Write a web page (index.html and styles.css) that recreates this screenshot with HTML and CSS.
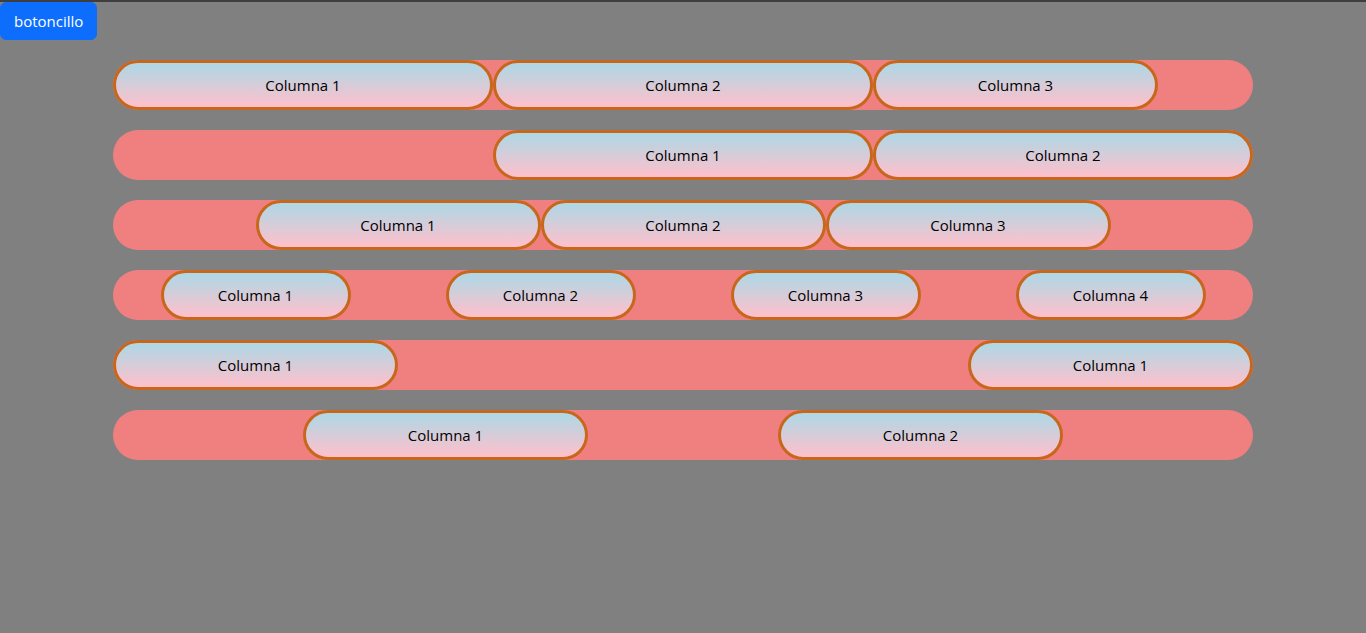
FILE: index.html
```html
<!DOCTYPE html>
<html lang="es">
<head>
  <meta charset="utf-8">
  <meta name="viewport" content="width=device-width, initial-scale=1">
  <title>Columnas</title>
  <link rel="stylesheet" href="styles.css">
</head>
<body>
  <button type="button" class="btn">botoncillo</button>
  <main class="container">
    <div class="row">
      <div class="col col-4">Columna 1</div>
      <div class="col col-4">Columna 2</div>
      <div class="col col-3">Columna 3</div>
    </div>
    <div class="row row-end">
      <div class="col col-4">Columna 1</div>
      <div class="col col-4">Columna 2</div>
    </div>
    <div class="row row-center">
      <div class="col col-3">Columna 1</div>
      <div class="col col-3">Columna 2</div>
      <div class="col col-3">Columna 3</div>
    </div>
    <div class="row row-around">
      <div class="col col-2">Columna 1</div>
      <div class="col col-2">Columna 2</div>
      <div class="col col-2">Columna 3</div>
      <div class="col col-2">Columna 4</div>
    </div>
    <div class="row row-between">
      <div class="col col-3">Columna 1</div>
      <div class="col col-3">Columna 1</div>
    </div>
    <div class="row row-evenly">
      <div class="col col-3">Columna 1</div>
      <div class="col col-3">Columna 2</div>
    </div>
  </main>
</body>
</html>
```

FILE: styles.css
```css
* {
  box-sizing: border-box;
}

body {
  margin: 0;
  border-top: 2px solid #3e3e3e;
  background: #808080;
  color: #000;
  font-family: "Segoe UI", "Open Sans", "Noto Sans", sans-serif;
  font-size: 15px;
  line-height: 24px;
}

.btn {
  display: block;
  padding: 6px 13px;
  border: 1px solid #0d6efd;
  border-radius: 6px;
  background: #0d6efd;
  color: #fff;
  font: inherit;
  cursor: pointer;
}

.container {
  display: flex;
  flex-direction: column;
  gap: 20px;
  max-width: 1140px;
  margin: 20px auto;
}

.row {
  display: flex;
  border-radius: 25px;
  background: lightcoral;
}

.row-end { justify-content: flex-end; }
.row-center { justify-content: center; }
.row-around { justify-content: space-around; }
.row-between { justify-content: space-between; }
.row-evenly { justify-content: space-evenly; }

.col {
  padding: 10px 12px;
  border: 3px solid #c8671b;
  border-radius: 25px;
  background: linear-gradient(lightblue, pink);
  text-align: center;
}

.col-2 { width: 16.6667%; }
.col-3 { width: 25%; }
.col-4 { width: 33.3333%; }
```
